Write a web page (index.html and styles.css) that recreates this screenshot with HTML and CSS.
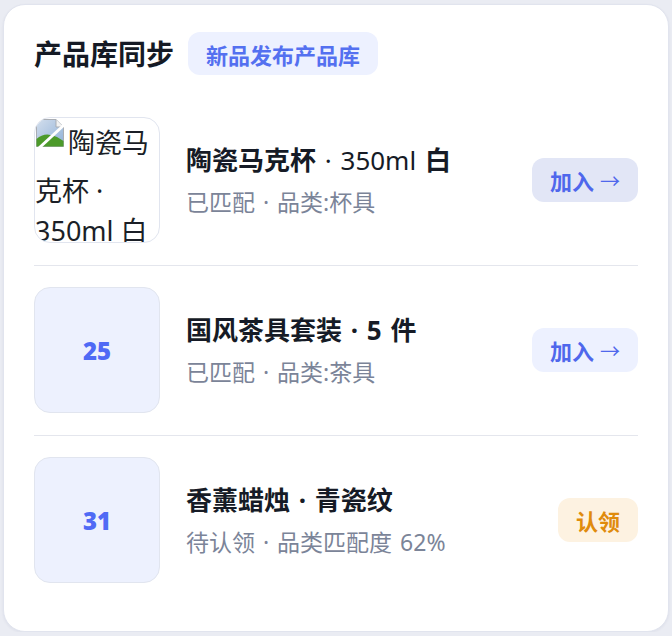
FILE: index.html
```html
<!DOCTYPE html>
<html lang="zh-CN">
<head>
<meta charset="utf-8">
<title>产品库同步</title>
<link rel="stylesheet" href="styles.css">
</head>
<body>
<div class="card">
  <div class="header">
    <h1 class="title">产品库同步</h1>
    <span class="badge">新品发布产品库</span>
  </div>
  <ul class="list">
    <li class="row">
      <div class="thumb thumb-img"><svg class="broken" viewBox="0 0 30 30" width="30" height="30"><defs><linearGradient id="sky" x1="0" y1="0" x2="1" y2="1"><stop offset="0" stop-color="#d3deec"/><stop offset="1" stop-color="#8fb0d8"/></linearGradient></defs><path d="M1.5 1.5 H21 L28.5 9 V28.5 H1.5 Z" fill="url(#sky)" stroke="#a9adb3" stroke-width="1"/><path d="M21 1.5 V9 H28.5" fill="#f2f2f2" stroke="#a9adb3" stroke-width="1"/><path d="M1.5 28.5 V21 Q10 13 22 19 L28.5 23 V28.5 Z" fill="#4c9a2a"/><path d="M4 30 L29 7" stroke="#fff" stroke-width="3"/></svg><span class="alt">陶瓷马克杯 · 350ml 白</span></div>
      <div class="info">
        <div class="name">陶瓷马克杯<span class="lat"> · 350ml </span>白</div>
        <div class="meta">已匹配 · 品类:杯具</div>
      </div>
      <button class="btn btn-join is-hover">加入 <span class="arrow">→</span></button>
    </li>
    <li class="row">
      <div class="thumb thumb-num">25</div>
      <div class="info">
        <div class="name">国风茶具套装 · 5 件</div>
        <div class="meta">已匹配 · 品类:茶具</div>
      </div>
      <button class="btn btn-join">加入 <span class="arrow">→</span></button>
    </li>
    <li class="row">
      <div class="thumb thumb-num">31</div>
      <div class="info">
        <div class="name">香薰蜡烛 · 青瓷纹</div>
        <div class="meta">待认领 · 品类匹配度 62%</div>
      </div>
      <button class="btn btn-claim">认领</button>
    </li>
  </ul>
</div>
</body>
</html>
```

FILE: styles.css
```css
* { box-sizing: border-box; }
html, body { margin: 0; padding: 0; }
body {
  background: #eaecf3;
  font-family: "Noto Sans", "Noto Sans CJK SC", sans-serif;
  padding: 4px 3px 0 3px;
}
.card {
  width: 666px;
  height: 628px;
  background: #fff;
  border: 1px solid #e1e4ee;
  border-radius: 22px;
  padding: 27px 30px 24px 30px;
  box-shadow: 0 1px 3px rgba(30, 40, 80, 0.06);
}
.header {
  display: flex;
  align-items: center;
  gap: 14px;
  height: 43px;
}
.title {
  margin: 0;
  font-size: 28px;
  font-weight: 700;
  color: #151a25;
  line-height: 1;
}
.badge {
  display: inline-flex;
  align-items: center;
  height: 43px;
  padding: 0 18px;
  background: #edf1ff;
  color: #5470f0;
  border-radius: 12px;
  font-size: 22px;
  font-weight: 700;
}
.list {
  list-style: none;
  margin: 21px 0 0 0;
  padding: 0;
}
.row {
  display: flex;
  align-items: center;
  gap: 26px;
  padding: 21px 0 22px 0;
  border-bottom: 1px solid #e4e6ed;
}
.row:last-child { border-bottom: none; }
.thumb {
  flex: 0 0 126px;
  width: 126px;
  height: 126px;
  border: 1px solid #e1e5ef;
  border-radius: 16px;
  overflow: hidden;
}
.thumb-img {
  background: #fff;
  font-size: 27px;
  line-height: 40px;
  color: #1b1f27;
  padding: 0;
}
.broken {
  display: inline-block;
  vertical-align: -18px;
  margin: 0 3px 23px 0;
}
.thumb-num {
  background: #edf1fe;
  display: flex;
  align-items: center;
  justify-content: center;
  color: #4f6af5;
  font-family: "Open Sans", "Noto Sans", sans-serif;
  font-weight: 800;
  font-size: 24px;
}
.info {
  flex: 1;
  display: flex;
  flex-direction: column;
  gap: 10px;
}
.name {
  font-size: 26px;
  font-weight: 700;
  color: #161b26;
  line-height: 34px;
  word-spacing: 2px;
}
.lat { font-weight: 400; }
.meta {
  font-size: 23px;
  color: #7b8498;
  line-height: 30px;
  word-spacing: 2px;
}
.btn {
  border: none;
  height: 44px;
  border-radius: 12px;
  font-family: "Noto Sans CJK SC", sans-serif;
  font-size: 22px;
  font-weight: 700;
  padding: 0 18px;
  display: inline-flex;
  align-items: center;
  gap: 6px;
}
.btn-join { background: #edf1ff; color: #4f67ec; }
.btn-join.is-hover { background: #e2e6f6; }
.arrow { font-weight: 400; font-size: 20px; }
.btn-claim { background: #fdf2e1; color: #e08b0c; padding: 0 18px; }
```
